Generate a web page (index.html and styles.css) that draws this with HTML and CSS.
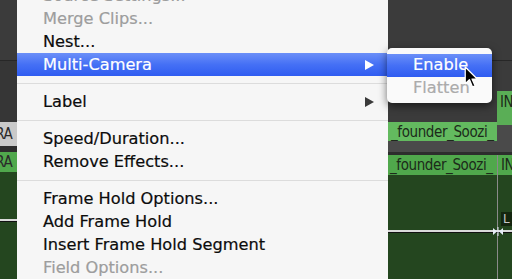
FILE: index.html
```html
<!DOCTYPE html>
<html lang="en">
<head>
    <meta charset="UTF-8">
    <meta name="viewport" content="width=device-width, initial-scale=1.0">
    <title>Clip Context Menu</title>
    <link rel="stylesheet" href="styles.css">
</head>
<body>
    <!-- Track strip left of the menu -->
    <div class="track-strip">
        <div class="band dark" style="height: 60px"></div>
        <div class="band rule"></div>
        <div class="band darker" style="height: 61px"></div>
        <div class="band clip-grey"><span class="clip-name">CAMERA</span></div>
        <div class="band gap"></div>
        <div class="band clip-head"><span class="clip-name">CAMERA</span></div>
        <div class="band body-green" style="height: 47px"></div>
        <div class="band edge"></div>
        <div class="band body-green fill"></div>
    </div>

    <!-- Context Menu -->
    <div class="menu">
        <div class="item disabled">Source Settings...</div>
        <div class="item disabled">Merge Clips...</div>
        <div class="item">Nest...</div>
        <div class="item selected">Multi-Camera <span class="arrow"></span></div>
        <div class="separator"></div>
        <div class="item">Label <span class="arrow"></span></div>
        <div class="separator"></div>
        <div class="item">Speed/Duration...</div>
        <div class="item">Remove Effects...</div>
        <div class="separator"></div>
        <div class="item">Frame Hold Options...</div>
        <div class="item">Add Frame Hold</div>
        <div class="item">Insert Frame Hold Segment</div>
        <div class="item disabled">Field Options...</div>
    </div>

    <!-- Timeline right of the menu -->
    <div class="timeline">
        <div class="lane wide">
            <div class="band dark" style="height: 60px"></div>
            <div class="band rule"></div>
            <div class="band dark" style="height: 61px"></div>
            <div class="band clip-light"><span class="clip-name">_founder_Soozi_</span></div>
            <div class="band mid" style="height: 11px"></div>
            <div class="band gap-thin"></div>
            <div class="band clip-head"><span class="clip-name">_founder_Soozi_</span></div>
            <div class="band body-green" style="height: 55px"></div>
            <div class="band edge"></div>
            <div class="band body-green fill"></div>
        </div>
        <div class="lane narrow">
            <div class="band dark" style="height: 60px"></div>
            <div class="band rule"></div>
            <div class="band dark" style="height: 30px"></div>
            <div class="band clip-in"><span class="clip-name">IN</span></div>
            <div class="band mid" style="height: 27px"></div>
            <div class="band gap-thin"></div>
            <div class="band clip-head split"><span class="clip-name">IN</span></div>
            <div class="band body-green split badge-row">
                <span class="badge">L</span>
            </div>
            <div class="band edge"></div>
            <div class="band body-green split fill"></div>
        </div>
    </div>

    <!-- Multi-Camera submenu -->
    <div class="submenu">
        <div class="item selected">Enable</div>
        <div class="item disabled">Flatten</div>
    </div>

    <svg class="pointer" width="15" height="23" viewBox="0 0 14 22">
        <path d="M1 1 L1 17 L5 13 L8 20 L10.5 19 L7.5 12.5 L12.5 12.5 Z" fill="#000" stroke="#fff" stroke-width="1.2" stroke-linejoin="round"/>
    </svg>

    <svg class="trim" width="12" height="9" viewBox="0 0 12 9">
        <path d="M1 1 L5 4.5 L1 8 Z M11 1 L7 4.5 L11 8 Z" fill="#e8eef8"/>
        <rect x="5.5" y="0" width="1" height="9" fill="#e8eef8"/>
    </svg>
</body>
</html>
```

FILE: styles.css
```css
/* Reset CSS */
* {
    margin: 0;
    padding: 0;
    box-sizing: border-box;
}

body {
    font-family: 'DejaVu Sans', sans-serif;
    width: 512px;
    height: 279px;
    overflow: hidden;
    display: flex;
    position: relative;
    background: #3a3a3a;
}

/* Timeline Styles */
.track-strip {
    width: 17px;
    display: flex;
    flex-direction: column;
    overflow: hidden;
}

.timeline {
    width: 124px;
    display: flex;
}

.lane {
    display: flex;
    flex-direction: column;
    overflow: hidden;
}

.lane.wide {
    width: 109px;
}

.lane.narrow {
    width: 15px;
}

.band {
    flex-shrink: 0;
    display: flex;
    align-items: center;
    white-space: nowrap;
    overflow: hidden;
}

.band.fill {
    flex: 1;
}

.dark {
    background: #3b3b3b;
}

.darker {
    background: #363636;
}

.rule {
    height: 1px;
    background: #272727;
}

.mid {
    background: #4a4a4a;
}

.gap {
    height: 6px;
    background: #2d2d2d;
}

.gap-thin {
    height: 3px;
    background: #2d2d2d;
}

.clip-name {
    font-family: 'DejaVu Sans Condensed', 'DejaVu Sans', sans-serif;
    font-size: 15px;
    letter-spacing: -0.4px;
    color: #1c2a1a;
}

.clip-grey {
    height: 24px;
    background: #c9c9c9;
}

.clip-grey .clip-name,
.track-strip .clip-head .clip-name {
    margin-left: -42px;
    color: #2a2a2a;
}

.clip-light {
    height: 19px;
    background: #63ba5f;
    padding-left: 3px;
}

.clip-in {
    height: 34px;
    background: #5aae56;
    padding-left: 3px;
    align-items: flex-start;
    padding-top: 2px;
}

.clip-head {
    height: 20px;
    background: #50a84c;
    padding-left: 2px;
}

.track-strip .clip-head {
    padding-left: 0;
}

.body-green {
    background: #24461f;
}

.edge {
    height: 3px;
    background: linear-gradient(#dadada 0, #dadada 2px, #111 2px);
}

.split {
    border-left: 1px solid #8a8a8a;
    padding-left: 3px;
}

.badge-row {
    height: 55px;
    align-items: flex-start;
    padding-top: 37px;
}

.badge {
    display: block;
    background: #14260f;
    color: #c8c8c8;
    font-size: 12px;
    line-height: 14px;
    padding: 0 2px;
}

/* Menu Styles */
.menu {
    width: 371px;
    margin-top: -16px;
    background: #f6f6f6;
    display: flex;
    flex-direction: column;
    align-self: flex-start;
    height: 295px;
}

.item {
    height: 23px;
    line-height: 23px;
    padding-left: 26px;
    font-size: 16.2px;
    color: #0c0c0c;
    -webkit-text-stroke: 0.2px currentColor;
    display: flex;
    align-items: center;
    justify-content: space-between;
    white-space: nowrap;
}

.item.disabled {
    color: #9d9d9d;
}

.item.selected {
    color: #fff;
    background: linear-gradient(#6b8ff8, #4570f5 50%, #2f5cf1);
}

.arrow {
    width: 0;
    height: 0;
    margin-right: 14px;
    border-top: 5px solid transparent;
    border-bottom: 5px solid transparent;
    border-left: 9px solid #3a3a3a;
}

.selected .arrow {
    border-left-color: #fff;
}

.separator {
    height: 14px;
    display: flex;
    align-items: center;
}

.separator::after {
    content: '';
    width: 100%;
    height: 1px;
    background: #dcdcdc;
}

/* Submenu Styles */
.submenu {
    position: absolute;
    left: 387px;
    top: 48px;
    width: 105px;
    padding: 6px 0 4px;
    background: #fafafa;
    border-radius: 5px;
    box-shadow: 0 3px 8px rgba(0, 0, 0, 0.55);
}

.submenu .item {
    height: 22.5px;
    line-height: 22.5px;
}

.submenu .item.disabled {
    color: #ababab;
}

.pointer {
    position: absolute;
    left: 464px;
    top: 66px;
}

.trim {
    position: absolute;
    left: 492px;
    top: 227px;
}
```
